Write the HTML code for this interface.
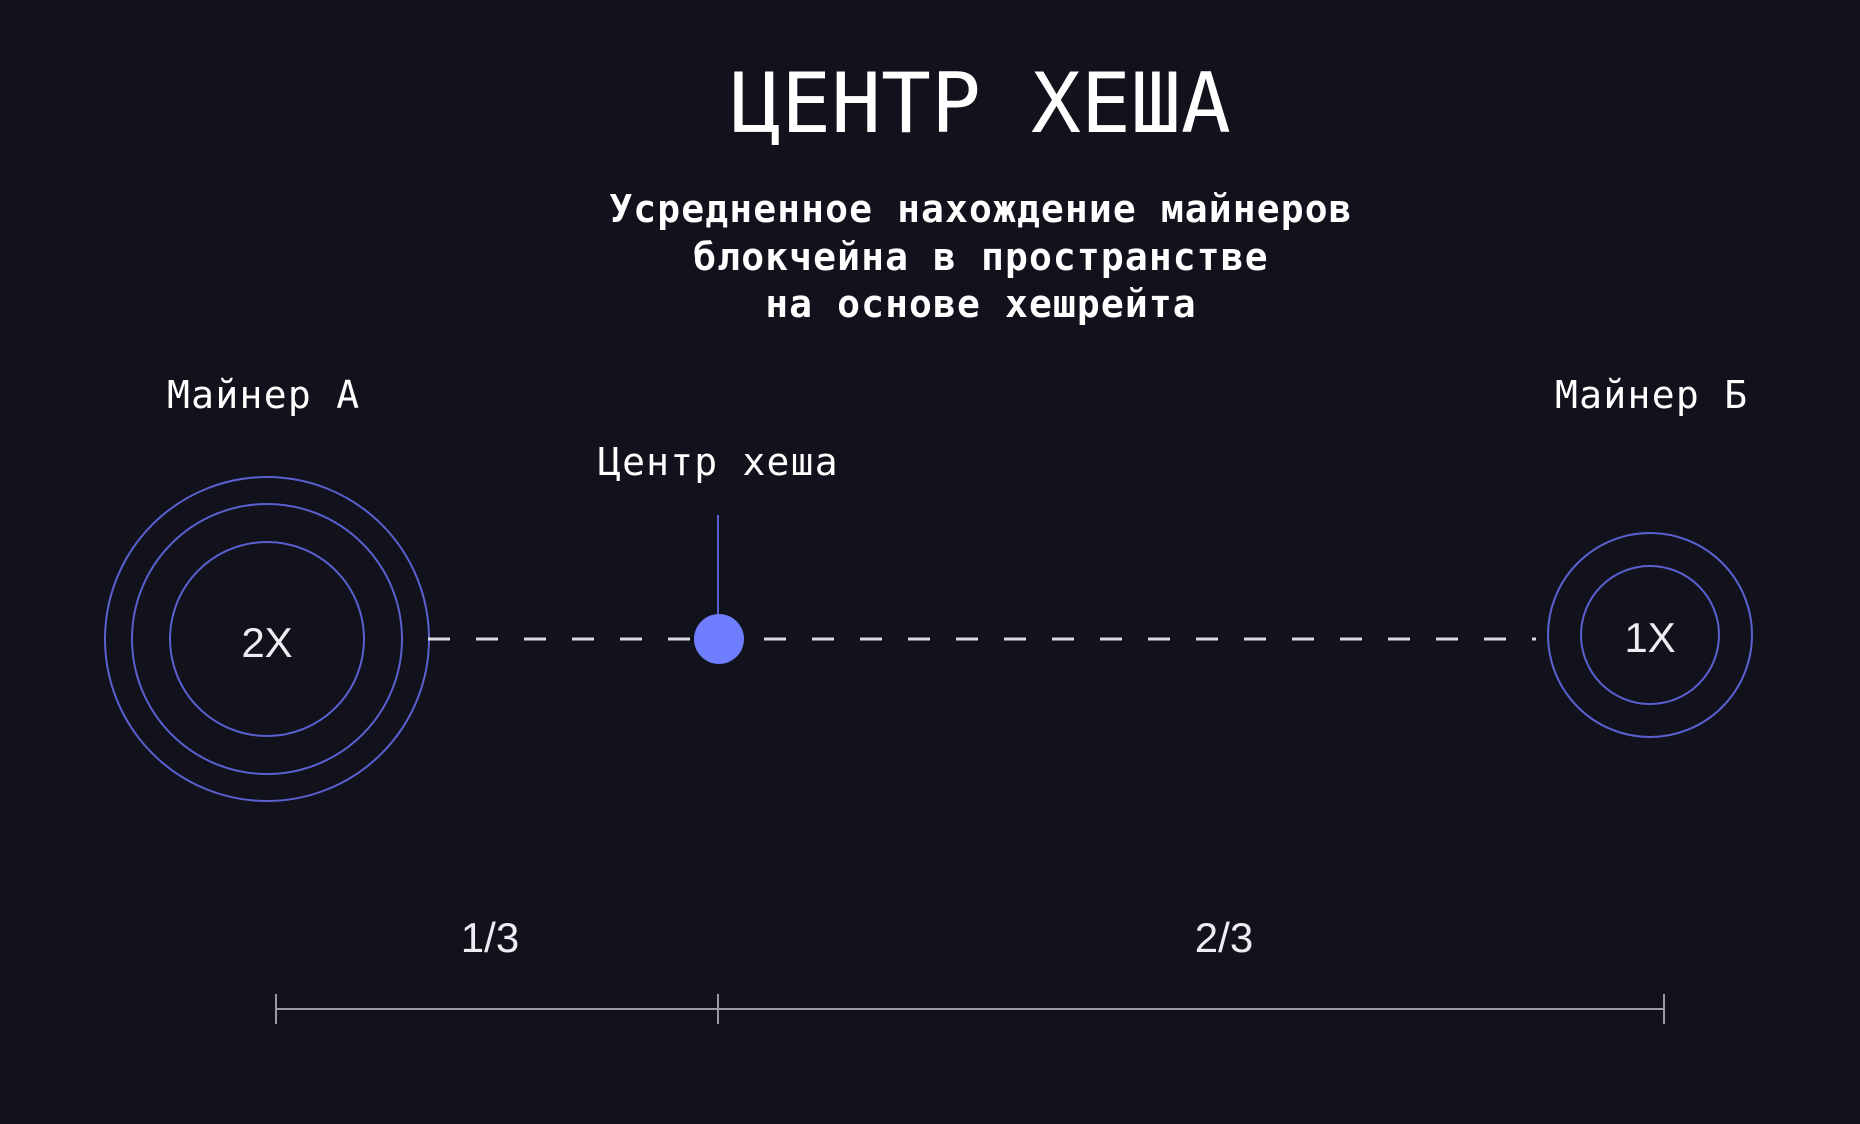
<!DOCTYPE html>
<html><head><meta charset="utf-8"><style>
html,body{margin:0;padding:0;background:#11121c;}
body{width:1860px;height:1124px;position:relative;overflow:hidden;font-family:"DejaVu Sans Mono","Liberation Mono",monospace;color:#fff;}
.t{position:absolute;white-space:nowrap;line-height:1;}
</style></head><body>
<div class="t" style="left:0;width:1962px;text-align:center;top:62px;font-size:83px;">ЦЕНТР ХЕША</div>
<div class="t" style="left:0;width:1962px;text-align:center;top:186px;font-size:38px;font-weight:bold;letter-spacing:1.1px;line-height:47.5px;">Усредненное нахождение майнеров<br>блокчейна в пространстве<br>на основе хешрейта</div>
<div class="t" style="left:167px;top:376px;font-size:38px;letter-spacing:1.3px;">Майнер А</div>
<div class="t" style="left:1555px;top:376px;font-size:38px;letter-spacing:1.3px;">Майнер Б</div>
<div class="t" style="left:598px;top:443px;font-size:38px;letter-spacing:1.2px;">Центр хеша</div>
<svg width="1860" height="1124" style="position:absolute;left:0;top:0">
<g fill="none" stroke="#5b60d0" stroke-width="2">
<circle cx="267" cy="639" r="162"/><circle cx="267" cy="639" r="135"/><circle cx="267" cy="639" r="97"/>
<circle cx="1650" cy="635" r="102"/><circle cx="1650" cy="635" r="69"/>
</g>
<line x1="428" y1="639" x2="1536" y2="639" stroke="#dcdce0" stroke-width="3" stroke-dasharray="22 26"/>
<line x1="718" y1="515" x2="718" y2="615" stroke="#5b60d0" stroke-width="2"/>
<circle cx="719" cy="639" r="25" fill="#6f7dff"/>
<g stroke="#9a9aa2" stroke-width="2">
<line x1="276" y1="1009" x2="1664" y2="1009"/>
<line x1="276" y1="994" x2="276" y2="1024"/>
<line x1="718" y1="994" x2="718" y2="1024"/>
<line x1="1664" y1="994" x2="1664" y2="1024"/>
</g>
<g fill="#eeeef2" font-family="Liberation Sans, DejaVu Sans, sans-serif" font-size="42" text-anchor="middle">
<text x="267" y="657">2X</text>
<text x="1650" y="652">1X</text>
<text x="490" y="952">1/3</text>
<text x="1224" y="952">2/3</text>
</g>
</svg>
</body></html>
